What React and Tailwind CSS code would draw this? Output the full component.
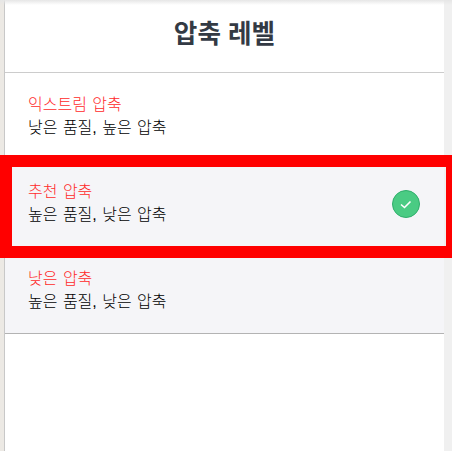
import React from "react";

const FONT = "font-['Liberation_Sans','Noto_Sans_CJK_KR',sans-serif]";

const levels = [
  { id: "extreme", title: "익스트림 압축", desc: "낮은 품질, 높은 압축" },
  { id: "recommended", title: "추천 압축", desc: "높은 품질, 낮은 압축", selected: true, shaded: true },
  { id: "low", title: "낮은 압축", desc: "높은 품질, 낮은 압축", shaded: true, last: true },
];

const CheckBadge = () => (
  <div className="flex h-7 w-7 items-center justify-center self-center rounded-full border border-[#2fae6b] bg-[#4acb83]">
    <svg width="14" height="14" viewBox="0 0 14 14" fill="none">
      <path d="M2 7.5 L5.5 10.5 L11.5 4.5" stroke="#ffffff" strokeWidth="1.6" />
    </svg>
  </div>
);

const LevelRow = ({ title, desc, selected, shaded, last }) => (
  <div
    className={`flex h-[87px] items-start justify-between pl-[23px] pr-[24px] ${
      shaded ? "bg-[#f5f5f8]" : "bg-white"
    } ${last ? "border-b border-[#b3b3b3]" : ""}`}
  >
    <div className="flex flex-col pt-[20px] font-light [word-spacing:1px]">
      <span className="text-[16px] leading-[23px] text-[#ff2a2a]">{title}</span>
      <span className="text-[16px] leading-[23px] text-black">{desc}</span>
    </div>
    {selected && <CheckBadge />}
  </div>
);

export default function App() {
  return (
    <div className={`relative flex h-[451px] w-[452px] overflow-hidden bg-[#f0f0f0] ${FONT}`}>
      <div className="w-[4px] shrink-0 bg-[#ece9e4]" />
      <div className="relative h-full w-[440px] shrink-0 border-l border-[#c8c8c8] bg-white">
        <div className="flex h-[73px] items-center justify-center border-b border-[#cccccc] pb-[4px]">
          <h1 className="text-[25.6px] font-bold text-[#333a44]">압축 레벨</h1>
        </div>
        {levels.map((level) => (
          <LevelRow key={level.id} {...level} />
        ))}
      </div>
      <div className="pointer-events-none absolute left-0 right-0 top-0 h-[5px] bg-gradient-to-b from-[#e6e6e6] to-transparent" />
      <div className="pointer-events-none absolute left-0 top-[155px] h-[103px] w-[452px] border-y-[12px] border-l-[12px] border-r-[6px] border-[#ff0000]" />
    </div>
  );
}
